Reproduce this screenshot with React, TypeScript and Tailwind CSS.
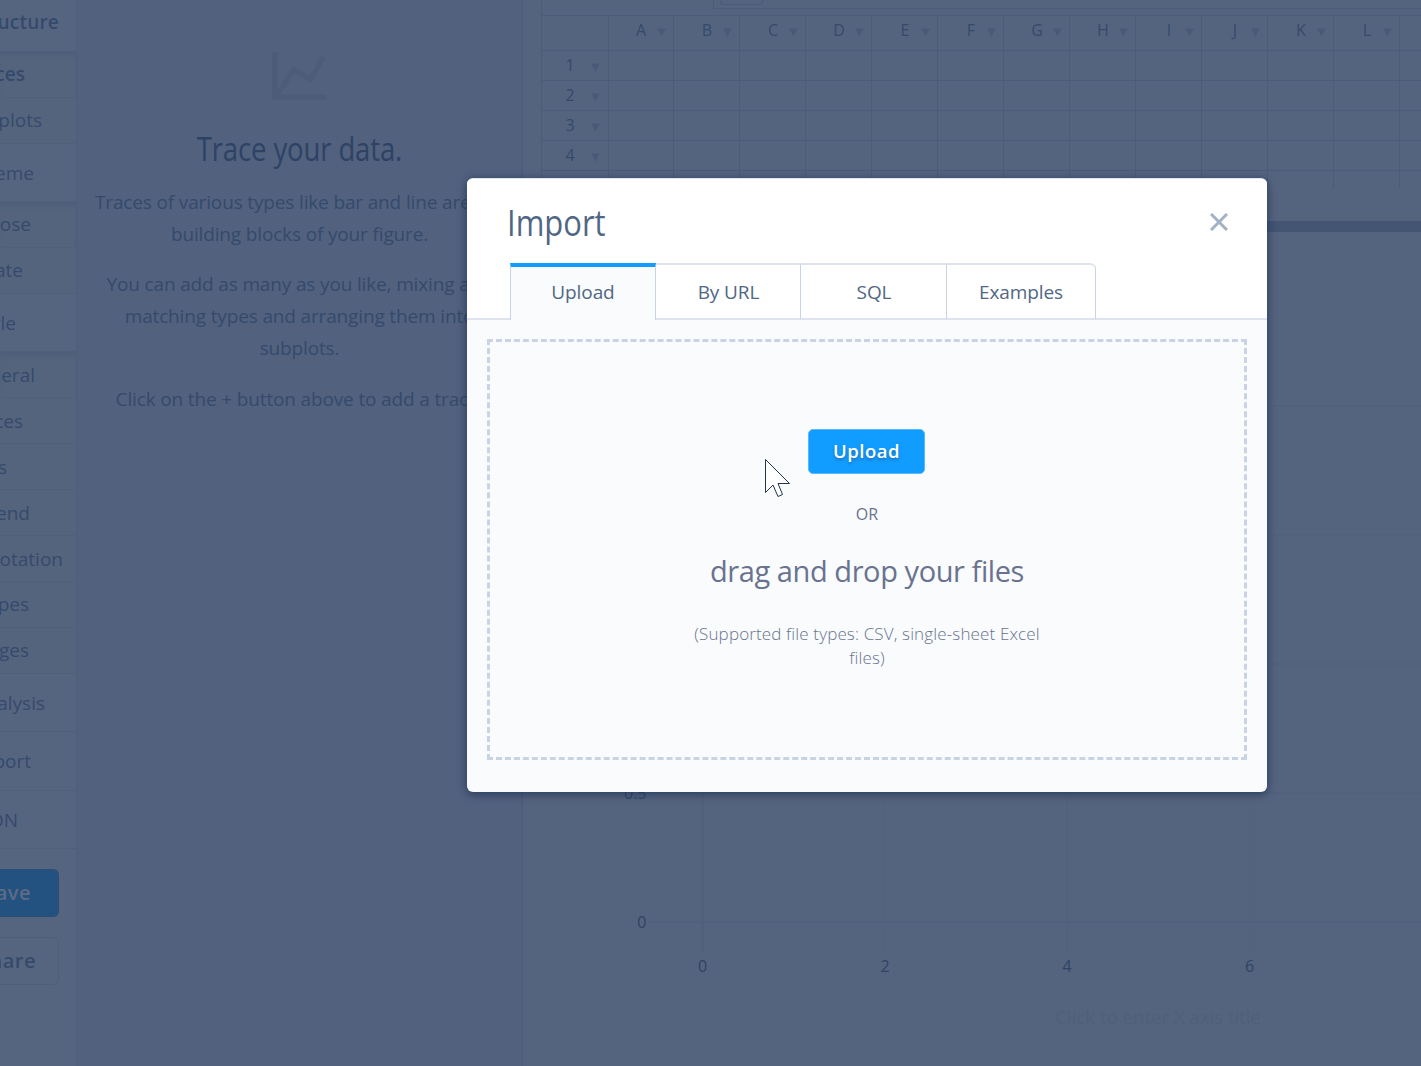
import React from "react";

type NavRow = { label: string; box: string; text: string };

const navRows: NavRow[] = [
  { label: "ucture", box: "h-[51px] pb-[5px] bg-[#56657f] font-semibold border-transparent", text: "w-[59px] tracking-[0.2px]" },
  { label: "ces", box: "h-[47px] bg-[#54647d] font-semibold border-[#50607b] shadow-[inset_0_8px_4px_-3px_#4f5f7b] ", text: "w-[25px]" },
  { label: "plots", box: "h-[46px] bg-[#54647d] border-[#50607b]", text: "w-[42px]" },
  { label: "eme", box: "h-[57px] pt-[2px] bg-[#56657f] border-transparent", text: "w-[34px]" },
  { label: "ose", box: "h-[47px] bg-[#54647d] border-[#50607b] shadow-[inset_0_8px_4px_-3px_#4f5f7b]", text: "w-[31px]" },
  { label: "ate", box: "h-[46px] bg-[#54647d] border-[#50607b]", text: "w-[23px]" },
  { label: "yle", box: "h-[57px] pt-[2px] bg-[#56657f] border-transparent", text: "w-[16px]" },
  { label: "neral", box: "h-[47px] pt-[2px] bg-[#54647d] border-[#50607b] shadow-[inset_0_8px_4px_-3px_#4f5f7b]", text: "w-[35px]" },
  { label: "ces", box: "h-[46px] pt-[2px] bg-[#54647d] border-[#50607b]", text: "w-[23px]" },
  { label: "s", box: "h-[46px] pt-[2px] bg-[#54647d] border-[#50607b]", text: "w-[7px]" },
  { label: "end", box: "h-[46px] pt-[2px] bg-[#54647d] border-[#50607b]", text: "w-[30px]" },
  { label: "otation", box: "h-[46px] pt-[2px] bg-[#54647d] border-[#50607b]", text: "w-[63px]" },
  { label: "pes", box: "h-[46px] bg-[#54647d] border-[#50607b]", text: "w-[29px]" },
  { label: "ges", box: "h-[46px] bg-[#54647d] border-[#50607b]", text: "w-[29px]" },
  { label: "alysis", box: "h-[58px] pt-[2px] bg-[#56657f] border-[#50607b]", text: "w-[45px]" },
  { label: "port", box: "h-[59px] bg-[#56657f] border-[#50607b]", text: "w-[31px]" },
  { label: "ON", box: "h-[58px] pt-[2px] bg-[#56657f] border-[#50607b]", text: "w-[18px]" },
];

const columns = ["A", "B", "C", "D", "E", "F", "G", "H", "I", "J", "K", "L", ""];
const sheetRows = ["1", "2", "3", "4", ""];

function Caret() {
  return (
    <svg width="9" height="9" viewBox="0 0 9 9" className="shrink-0">
      <path d="M0.2 0.5h8.6L4.5 8.8z" fill="#495a79" />
    </svg>
  );
}

function Sidebar() {
  return (
    <nav className="flex h-full w-[77px] shrink-0 flex-col overflow-hidden border-r border-[#4e5d7a] bg-[#56657f] text-[19px] text-[#344a6c]">
      {navRows.map((row, i) => (
        <div key={i} className={`flex shrink-0 items-center border-b ${row.box}`}>
          <div className={`flex shrink-0 justify-end whitespace-nowrap ${row.text}`}>
            <span>{row.label}</span>
          </div>
        </div>
      ))}
      <div className="mt-5 flex h-12 w-[59px] shrink-0 items-center justify-end rounded-r-md border border-l-0 border-[#2c4d75] bg-[#245280] pr-[27px] text-[20px] font-semibold tracking-[0.5px] text-[#5d6b85]">
        <span>ave</span>
      </div>
      <div className="mt-5 flex h-12 w-[59px] shrink-0 items-center justify-end rounded-r-md border border-l-0 border-[#4e5d7a] pr-[22px] text-[20px] font-semibold tracking-[0.5px]">
        <span>hare</span>
      </div>
    </nav>
  );
}

function TracePanel() {
  return (
    <section className="flex h-full w-[446px] shrink-0 flex-col items-center border-r border-[#4b5b79] bg-[#52617e] text-center text-[19px] leading-8 tracking-[-0.15px] text-[#344a6c]">
      <svg width="54" height="49" viewBox="0 0 54 49" className="mr-[2px] mt-[52px] shrink-0">
        <path d="M2.7 0v45.3H54" fill="none" stroke="#4c5d79" strokeWidth="5.4" />
        <path d="M5 44L21.5 17.5l17 10L51.5 5" fill="none" stroke="#4c5d79" strokeWidth="5" />
      </svg>
      <h2 className="mt-7 origin-center scale-x-[0.86] whitespace-nowrap text-[32px] leading-10 text-[#2d4365]">Trace your data.</h2>
      <p className="mt-[17px] whitespace-nowrap">
        Traces of various types like bar and line are the
        <br />
        building blocks of your figure.
      </p>
      <p className="mt-[18px] whitespace-nowrap">
        You can add as many as you like, mixing and
        <br />
        matching types and arranging them into
        <br />
        subplots.
      </p>
      <p className="mt-[19px] whitespace-nowrap">Click on the + button above to add a trace.</p>
    </section>
  );
}

function Sheet() {
  return (
    <div className="flex h-[188px] w-full shrink-0 flex-col overflow-hidden border-l border-[#4b5b79]">
      <div className="flex h-[15px] shrink-0 items-start">
        <div className="ml-[171px] flex h-[9px] grow items-start border-b border-l border-[#4b5b79] pl-1.5">
          <div className="h-[5px] w-[43px] rounded-b border border-t-0 border-[#4b5b79]" />
        </div>
      </div>
      <div className="flex h-9 shrink-0 border-y border-[#4b5b79]">
        <div className="w-[67px] shrink-0 border-r border-[#4b5b79]" />
        {columns.map((c, i) => (
          <div key={i} className={`${i === 0 ? "w-[65px]" : "w-[66px]"} flex shrink-0 items-center justify-end border-r border-[#4b5b79] pr-[7px]`}>
            <span className="w-[14px] pb-[6px] text-center text-base leading-6">{c}</span>
            <span className="ml-[9px] pb-px">{c && <Caret />}</span>
          </div>
        ))}
      </div>
      {sheetRows.map((r, i) => (
        <div key={i} className="flex h-[30px] shrink-0 border-b border-[#4b5b79]">
          <div className="flex w-[67px] shrink-0 items-center justify-end border-r border-[#4b5b79] pr-[8px]">
            <span className="w-[14px] pb-[2px] text-center text-base leading-6">{r}</span>
            <span className="ml-[14px] pt-[4px]">{r && <Caret />}</span>
          </div>
          {columns.map((_, j) => (
            <div key={j} className={`${j === 0 ? "w-[65px]" : "w-[66px]"} shrink-0 border-r border-[#4b5b79]`} />
          ))}
        </div>
      ))}
    </div>
  );
}

function Chart() {
  return (
    <svg width="898" height="834" viewBox="523 232 898 834" className="shrink-0" fontSize="16">
      <g stroke="#51617d" fill="none">
        <path d="M649 922H1421" strokeWidth="2" />
        <path d="M649 793H1421M649 664H1421M649 535H1421M649 406H1421" />
        <path d="M702.5 300V953" strokeWidth="3" />
        <path d="M884.5 300V953M1249.5 300V953" stroke="#52627e" />
        <path d="M1067 300V953" strokeWidth="2" stroke="#52627e" />
      </g>
      <g fill="#2d4365">
        <g textAnchor="end">
          <text x="646.5" y="799">0.5</text>
          <text x="646.5" y="928">0</text>
        </g>
        <g textAnchor="middle">
          <text x="702.5" y="972">0</text>
          <text x="885" y="972">2</text>
          <text x="1067" y="972">4</text>
          <text x="1249.5" y="972">6</text>
        </g>
      </g>
      <text x="1055" y="1024" fontSize="19" fill="#4f5f7b" textLength="206">Click to enter X axis title</text>
    </svg>
  );
}

function ImportDialog() {
  const tab = "flex items-center justify-center border-r border-[#c8d4e3] pt-[3px]";
  return (
    <div role="dialog" className="absolute left-[467px] top-[178px] flex h-[614px] w-[800px] flex-col overflow-hidden rounded-md border-t border-[#dfe4ef] bg-[#f9fbfd] shadow-[0_2px_9px_1px_rgba(32,52,90,0.75)]">
      <header className="flex h-[84px] shrink-0 items-center justify-between bg-white pl-10 pr-[39px]">
        <h1 className="origin-left scale-x-[0.86] pt-[4px] text-[36px] leading-[44px] text-[#506784]">Import</h1>
        <svg width="18" height="18" viewBox="0 0 18 18" className="mt-px">
          <path d="M1 1l16 16M17 1L1 17" stroke="#a2b1c6" strokeWidth="3" />
        </svg>
      </header>
      <div className="flex h-[57px] shrink-0 bg-white text-[19px] tracking-[-0.1px] text-[#506784]">
        <div className="w-[43px] border-b-2 border-[#dfe3ef]" />
        <div className="flex w-[146px] items-center justify-center border-x border-t-4 border-x-[#c8d4e3] border-t-[#119dff] bg-[#f9fbfd]">
          <span className="pb-[3px]">Upload</span>
        </div>
        <div className="flex grow">
          <div className={`${tab} w-[145px] border-y-2 border-y-[#dfe3ef]`}><span className="pb-[2px] pl-px">By URL</span></div>
          <div className={`${tab} w-[146px] border-y-2 border-y-[#dfe3ef]`}><span className="pb-[2px] pl-px">SQL</span></div>
          <div className={`${tab} w-[149px] rounded-tr-md border-y-2 border-y-[#dfe3ef]`}><span className="pb-[2px]">Examples</span></div>
          <div className="grow border-b-2 border-[#dfe3ef]" />
        </div>
      </div>
      <div className="mx-5 mt-[19px] flex h-[421px] shrink-0 flex-col items-center border-[3px] border-dashed border-[#c8d4e3] text-[#69738f]">
        <button className="mr-px mt-[87px] flex h-[45px] w-[117px] items-center justify-center rounded-[5px] border border-[#58b8ff] bg-[#119dff] pb-[2px] text-[18.5px] font-semibold tracking-[0.5px] text-white [text-shadow:0_2px_3px_rgba(40,80,140,0.6)]">
          Upload
        </button>
        <div className="mt-[28px] text-base leading-6">OR</div>
        <div className="mt-[25px] text-[29px] leading-10 tracking-[-0.42px]">drag and drop your files</div>
        <p className="mt-[31px] w-[380px] text-center text-[17px] font-light leading-6 tracking-[0.14px]">
          (Supported file types: CSV, single-sheet Excel
          <br />
          files)
        </p>
      </div>
    </div>
  );
}

export default function App() {
  return (
    <div className="relative flex h-[1066px] w-[1421px] overflow-hidden bg-[#55647e] font-['Open_Sans',sans-serif] text-[#344a6c]">
      <Sidebar />
      <TracePanel />
      <main className="flex min-w-0 grow flex-col overflow-hidden">
        <div className="flex shrink-0 pl-[18px]">
          <Sheet />
        </div>
        <div className="mt-[33px] h-[11px] shrink-0 bg-[#435573]" />
        <Chart />
      </main>
      <ImportDialog />
      <svg width="27" height="40" viewBox="0 0 27 40" className="absolute left-[765px] top-[459px]">
        <path d="M.5 .5V33.5L8 26l5 11.5 4.5-2L13 24.500H24.500z" fill="white" stroke="#20344f" strokeWidth="1" />
      </svg>
    </div>
  );
}
